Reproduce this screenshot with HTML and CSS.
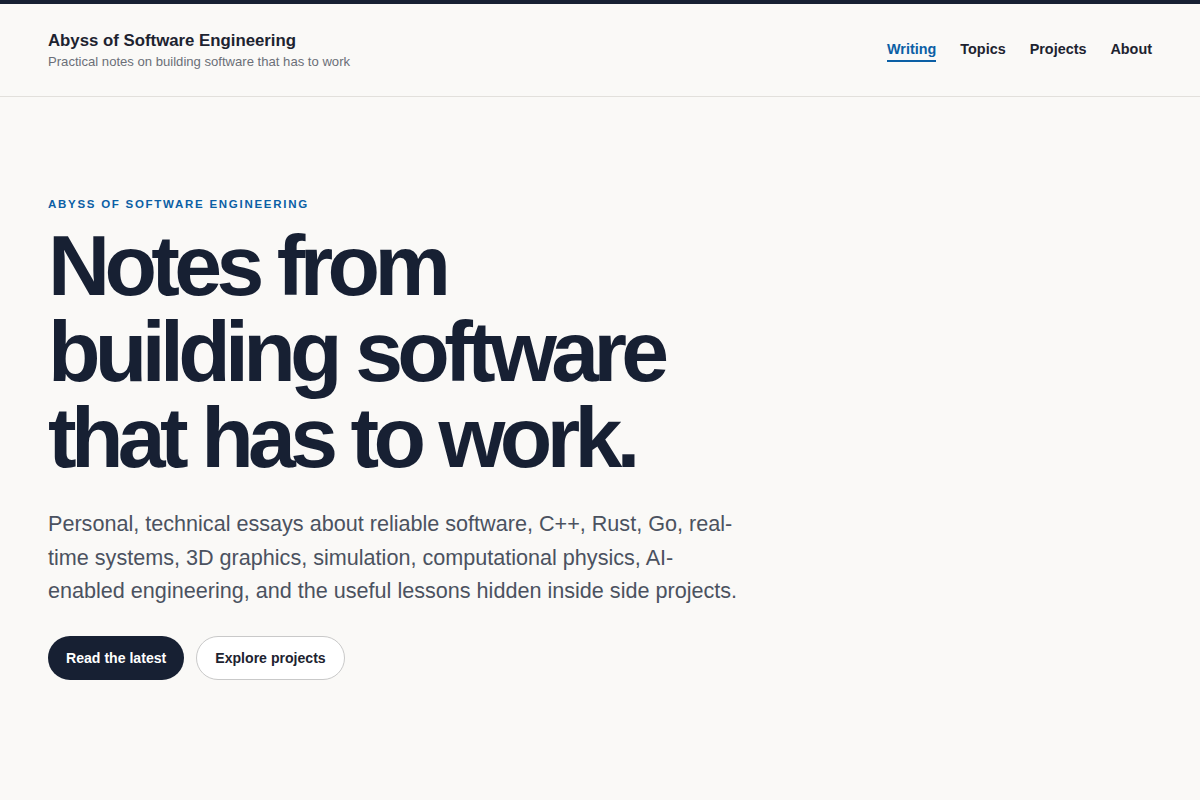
FILE: index.html
```html
<!DOCTYPE html>
<html lang="en">
<head>
<meta charset="utf-8">
<title>Abyss of Software Engineering</title>
<link rel="stylesheet" href="styles.css">
</head>
<body>
<header class="site-header">
  <div class="brand">
    <a class="brand-title" href="#">Abyss of Software Engineering</a>
    <p class="brand-tagline">Practical notes on building software that has to work</p>
  </div>
  <nav class="nav">
    <a class="nav-link active" href="#">Writing</a>
    <a class="nav-link" href="#">Topics</a>
    <a class="nav-link" href="#">Projects</a>
    <a class="nav-link" href="#">About</a>
  </nav>
</header>
<main class="hero">
  <p class="eyebrow">Abyss of Software Engineering</p>
  <h1 class="hero-title">Notes from<br>building software<br>that has to work.</h1>
  <p class="hero-lede">Personal, technical essays about reliable software, C++, Rust, Go, real-time systems, 3D graphics, simulation, computational physics, AI-enabled engineering, and the useful lessons hidden inside side projects.</p>
  <div class="actions">
    <a class="btn btn-primary" href="#">Read the latest</a>
    <a class="btn btn-secondary" href="#">Explore projects</a>
  </div>
</main>
</body>
</html>
```

FILE: styles.css
```css
* { box-sizing: border-box; }
html, body { margin: 0; padding: 0; }
body {
  background: #faf9f7;
  color: #172033;
  font-family: "Liberation Sans", Arial, sans-serif;
  border-top: 4px solid #172033;
  min-height: 100vh;
}
a { text-decoration: none; color: inherit; }
p { margin: 0; }

.site-header {
  display: flex;
  justify-content: space-between;
  align-items: center;
  padding: 0 48px;
  height: 93px;
  border-bottom: 1px solid #e2e0dc;
}
.brand { display: flex; flex-direction: column; gap: 3px; }
.brand-title {
  font-size: 16.8px;
  font-weight: 700;
  color: #1d2330;
  line-height: 20px;
}
.brand-tagline {
  font-size: 13.1px;
  color: #6b6f78;
  line-height: 16px;
}
.nav { display: flex; gap: 24px; align-items: center; padding-top: 2px; }
.nav-link {
  font-size: 14.4px;
  font-weight: 700;
  color: #1d2330;
  padding-bottom: 3px;
  border-bottom: 2px solid transparent;
  line-height: 16px;
}
.nav-link.active { color: #0b5fa5; border-bottom-color: #0b5fa5; }

.hero { padding: 99px 48px 0; }
.eyebrow {
  font-size: 11.5px;
  font-weight: 700;
  letter-spacing: 0.15em;
  text-transform: uppercase;
  color: #0b5fa5;
  line-height: 16px;
  margin-bottom: 10px;
}
.hero-title {
  margin: 0;
  font-size: 86px;
  line-height: 86px;
  font-weight: 700;
  letter-spacing: -0.066em;
  color: #172033;
}
.hero-lede {
  margin-top: 27px;
  max-width: 700px;
  font-size: 21.6px;
  line-height: 33.5px;
  color: #4b5260;
}
.actions { display: flex; gap: 12px; margin-top: 28px; }
.btn {
  display: inline-flex;
  align-items: center;
  height: 44px;
  padding: 0 18px;
  border-radius: 22px;
  font-size: 14.1px;
  font-weight: 700;
}
.btn-primary { background: #172033; color: #ffffff; }
.btn-secondary { background: #ffffff; color: #1d2330; border: 1px solid #c9c9c9; }
```
